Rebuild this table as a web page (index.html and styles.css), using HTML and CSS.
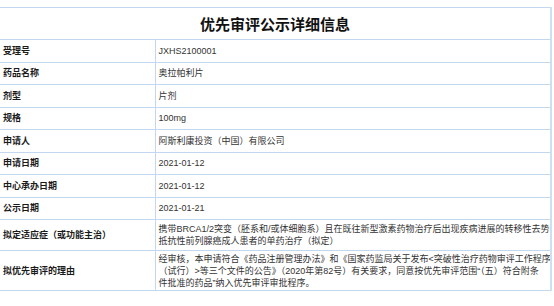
FILE: index.html
```html
<!DOCTYPE html>
<html lang="zh-CN">
<head>
<meta charset="utf-8">
<title>优先审评公示详细信息</title>
<link rel="stylesheet" href="styles.css">
</head>
<body>
<div class="wrap">
<table class="info">
  <colgroup><col class="c-label"><col class="c-value"></colgroup>
  <tr class="r-title"><th colspan="2" class="title">优先审评公示详细信息</th></tr>
  <tr><td class="label">受理号</td><td class="value">JXHS2100001</td></tr>
  <tr><td class="label">药品名称</td><td class="value">奥拉帕利片</td></tr>
  <tr><td class="label">剂型</td><td class="value">片剂</td></tr>
  <tr><td class="label">规格</td><td class="value">100mg</td></tr>
  <tr><td class="label">申请人</td><td class="value">阿斯利康投资（中国）有限公司</td></tr>
  <tr><td class="label">申请日期</td><td class="value">2021-01-12</td></tr>
  <tr><td class="label">中心承办日期</td><td class="value">2021-01-12</td></tr>
  <tr><td class="label">公示日期</td><td class="value">2021-01-21</td></tr>
  <tr class="r-two"><td class="label">拟定适应症（或功能主治）</td><td class="value">携带BRCA1/2突变（胚系和/或体细胞系）且在既往新型激素药物治疗后出现疾病进展的转移性去势<br>抵抗性前列腺癌成人患者的单药治疗（拟定）</td></tr>
  <tr class="r-three"><td class="label">拟优先审评的理由</td><td class="value">经审核，本申请符合《药品注册管理办法》和《国家药监局关于发布&lt;突破性治疗药物审评工作程序<br>（试行）&gt;等三个文件的公告》（2020年第82号）有关要求，同意按优先审评范围“（五）符合附条<br>件批准的药品”纳入优先审评审批程序。</td></tr>
</table>
</div>
</body>
</html>
```
FILE: styles.css
```css
html, body {
  margin: 0;
  padding: 0;
  background: #ffffff;
}
.wrap {
  padding-top: 7px;
}
.info {
  border-collapse: collapse;
  table-layout: fixed;
  width: 552px;
  font-family: "Liberation Sans", "Noto Sans CJK SC", sans-serif;
  font-size: 9px;
  line-height: 12px;
  color: #333333;
  border-right: 2px solid #cddff1;
}
.c-label { width: 155px; }
.info th, .info td {
  border-top: 1px solid #c3d8ee;
  border-bottom: 1px solid #c3d8ee;
  padding: 0 3px;
  vertical-align: middle;
  text-align: left;
  overflow: hidden;
}
.info td.value {
  white-space: nowrap;
}
.info td.label {
  border-right: 1px solid #c3d8ee;
  font-weight: bold;
  color: #1a1a1a;
}
.info tr { height: 22.5px; }
.info tr.r-title { height: 32px; }
.info tr.r-two { height: 31px; }
.info tr.r-three { height: 40px; }
.info th.title {
  text-align: center;
  font-size: 15px;
  line-height: 20px;
  font-weight: bold;
  color: #111111;
  font-family: "Noto Sans CJK SC", sans-serif;
}
```
